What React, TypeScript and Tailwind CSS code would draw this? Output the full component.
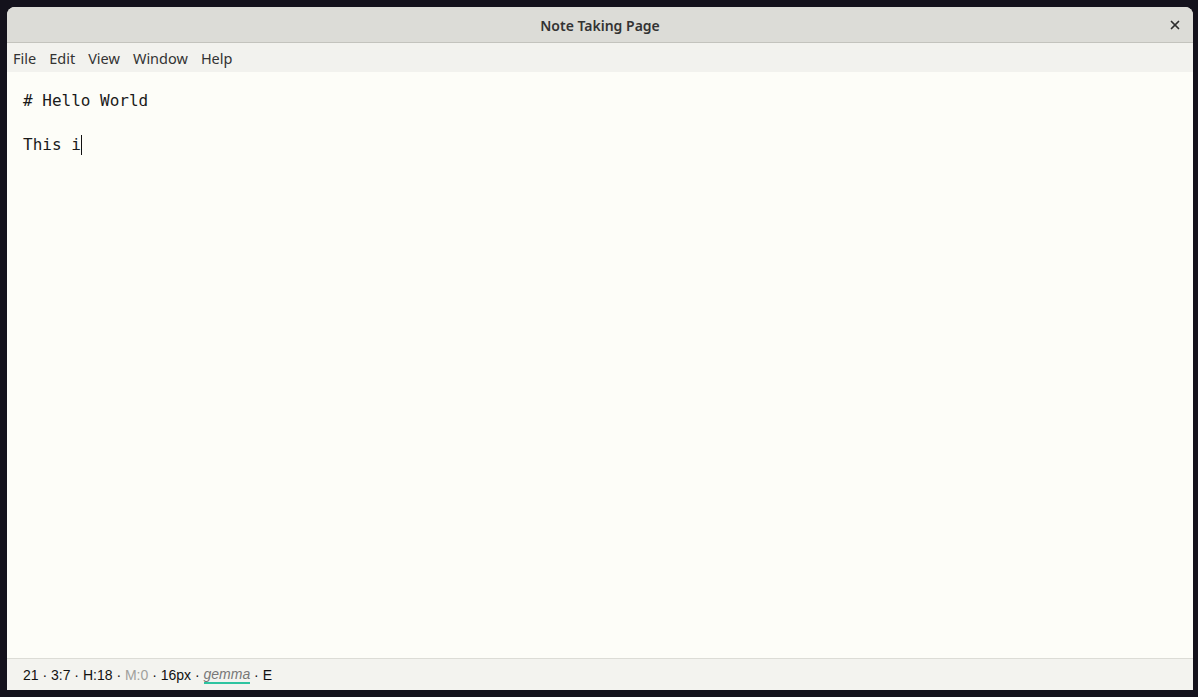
import { X } from "lucide-react";

const menus = ["File", "Edit", "View", "Window", "Help"];

export default function App() {
  return (
    <div className="w-[1198px] h-[697px] bg-[#14121c] pt-[7px] pl-[7px] pr-[5px] pb-[7px]">
      <div className="h-full flex flex-col rounded-t-[8px] overflow-hidden bg-[#fdfdf8]">
        {/* title bar */}
        <div className="relative h-[36px] shrink-0 bg-[#dcdcd7] border-b border-[#c3c3bd] flex items-center justify-center pt-[2px]">
          <span className="text-[14px] font-semibold text-[#333333] [font-family:'Noto_Sans',sans-serif]">
            Note Taking Page
          </span>
          <button className="absolute right-[11px] top-[11px] text-[#2e2e2e]">
            <X size={14} strokeWidth={3} />
          </button>
        </div>

        {/* menu bar */}
        <div className="h-[29px] shrink-0 bg-[#f2f2ee] flex items-center gap-[13px] pl-[6px] pt-[2px] text-[14.5px] text-[#333] [font-family:'Noto_Sans',sans-serif]">
          {menus.map((m) => (
            <span key={m}>{m}</span>
          ))}
        </div>

        {/* editor */}
        <div className="flex-1 pt-[18px] pl-[16px] text-[16px] leading-[22px] text-[#1a1a1a] [font-family:'DejaVu_Sans_Mono',monospace]">
          <p># Hello World</p>
          <p>&nbsp;</p>
          <p className="flex items-center">
            This i<span className="inline-block w-[1px] h-[20px] bg-[#111]" />
          </p>
        </div>

        {/* status bar */}
        <div className="h-[32px] shrink-0 bg-[#f3f3ef] border-t border-[#dcdcd6] flex items-center pl-[16px] pt-[1px] text-[14px] text-[#111] [font-family:'Liberation_Sans',Arial,sans-serif] whitespace-pre">
          <span>21 · 3:7 · H:18 · </span>
          <span className="text-[#a0a09c]">M:0</span>
          <span> · 16px · </span>
          <span className="italic text-[#777] border-b-2 border-[#2ec4a0] leading-[16px]">gemma</span>
          <span> · E</span>
        </div>
      </div>
    </div>
  );
}
